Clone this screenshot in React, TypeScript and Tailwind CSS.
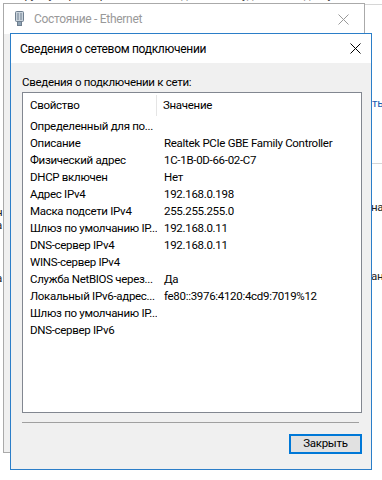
import React from 'react';

const rows: [string, string][] = [
  ['Определенный для по...', ''],
  ['Описание', 'Realtek PCIe GBE Family Controller'],
  ['Физический адрес', '1C-1B-0D-66-02-C7'],
  ['DHCP включен', 'Нет'],
  ['Адрес IPv4', '192.168.0.198'],
  ['Маска подсети IPv4', '255.255.255.0'],
  ['Шлюз по умолчанию IP...', '192.168.0.11'],
  ['DNS-сервер IPv4', '192.168.0.11'],
  ['WINS-сервер IPv4', ''],
  ['Служба NetBIOS через...', 'Да'],
  ['Локальный IPv6-адрес...', 'fe80::3976:4120:4cd9:7019%12'],
  ['Шлюз по умолчанию IP...', ''],
  ['DNS-сервер IPv6', ''],
];

const font = { fontFamily: 'Roboto, "Noto Sans", sans-serif' };

// adapter icon from the status window title
const AdapterIcon = () => (
  <svg width="9" height="16" viewBox="0 0 9 16">
    <rect x="0.5" y="0.5" width="8" height="10" rx="1" fill="#c9d3dc" stroke="#6f7f8f" />
    <line x1="3" y1="2" x2="3" y2="9" stroke="#6f7f8f" />
    <line x1="6" y1="2" x2="6" y2="9" stroke="#6f7f8f" />
    <rect x="2.5" y="10.5" width="4" height="4" fill="#8fa3b5" stroke="#6f7f8f" />
  </svg>
);

const CloseX = ({ color }: { color: string }) => (
  <svg width="11" height="11" viewBox="0 0 11 11">
    <path d="M0.5 0.5 L10.5 10.5 M10.5 0.5 L0.5 10.5" stroke={color} strokeWidth="1" />
  </svg>
);

export default function App() {
  return (
    <div
      className="relative w-[382px] h-[480px] bg-white overflow-hidden text-[11.5px] tracking-[-0.3px] text-black"
      style={font}
    >
      {/* window underneath, mostly hidden */}
      <div className="absolute left-[20px] top-[-13px] text-[#333] whitespace-nowrap">
        группу параметров сетевого подключения удаленного доступа
      </div>
      <div className="absolute left-[364px] top-[4px] w-[18px] h-px bg-[#d6d6d6]" />
      <div className="absolute left-[372px] top-[163px] w-[10px] h-px bg-[#d6d6d6]" />
      <div className="absolute left-[372px] top-[95px] text-[#1a5fb4] whitespace-nowrap">ть</div>
      <div className="absolute left-[371px] top-[199px] text-[#222] whitespace-nowrap">на</div>
      <div className="absolute left-[371px] top-[268px] text-[#222] whitespace-nowrap">ан</div>
      <div className="absolute left-[-4px] top-[207px] leading-none text-[#222]">н</div>
      <div className="absolute left-[-4px] top-[220px] leading-none text-[#222]">а</div>
      <div className="absolute left-[-4px] top-[273px] leading-none text-[#222]">а</div>

      {/* status window */}
      <div className="absolute left-[3px] top-[3px] w-[362px] h-[450px] border border-[#aaaaaa] bg-[#f0f0f0]">
        <div className="h-[30px] bg-white flex items-center pl-[11px] pr-[10px]">
          <AdapterIcon />
          <span className="ml-[10px] text-[#999999] text-[12px]">Состояние - Ethernet</span>
          <div className="ml-auto mr-[5px] flex">
            <CloseX color="#999999" />
          </div>
        </div>
      </div>

      {/* details dialog */}
      <div className="absolute left-[10px] top-[33px] w-[362px] h-[437px] border border-[#2b7ec8] bg-[#f0f0f0] flex flex-col">
        <div className="h-[29px] bg-white flex items-center pl-[9px] pr-[10px]">
          <span className="text-[12px]">Сведения о сетевом подключении</span>
          <div className="ml-auto flex">
            <CloseX color="#000000" />
          </div>
        </div>
        <div className="flex-1 flex flex-col pl-[11px] pr-[9px]">
          <div className="h-[29px] flex items-center pt-[10px]">Сведения о подключении к сети:</div>
          <div className="h-[321px] bg-white border border-[#828790] flex flex-col">
            <div className="h-[25px] flex items-center">
              <div className="w-[134px] pl-[7px] self-stretch flex items-center border-r border-[#e5e5e5] my-[2px]">Свойство</div>
              <div className="pl-[6px]">Значение</div>
            </div>
            {rows.map(([k, v], i) => (
              <div key={i} className="h-[17px] flex items-center whitespace-nowrap">
                <div className="w-[134px] pl-[7px] overflow-hidden">{k}</div>
                <div className="pl-[7px]">{v}</div>
              </div>
            ))}
          </div>
          <div className="mt-[9px] h-px bg-[#a0a0a0] w-[337px]" />
          <div className="flex justify-end mt-[11px]">
            <button className="w-[73px] h-[20px] border-2 border-[#0078d7] bg-[#e1e1e1] flex items-center justify-center">
              Закрыть
            </button>
          </div>
        </div>
      </div>
    </div>
  );
}
